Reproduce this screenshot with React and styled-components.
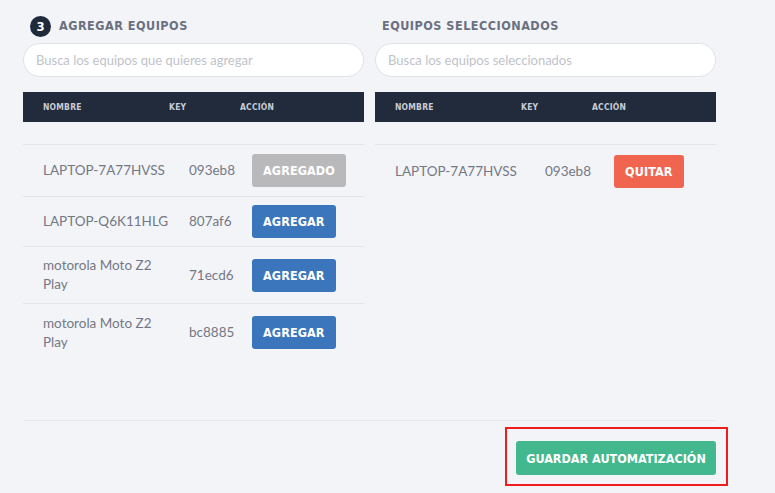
import React from 'react'
import styled, { createGlobalStyle } from 'styled-components'

const GlobalStyle = createGlobalStyle`
  * { box-sizing: border-box; }
  body {
    margin: 0;
    background: #f3f4f8;
    font-family: Lato, "Open Sans", sans-serif;
  }
`

const Page = styled.div`
  min-height: 100vh;
  display: flex;
  flex-direction: column;
  padding: 15px 0 0 23px;
  width: 716px;
`

const Columns = styled.div`
  flex: 1;
  display: grid;
  grid-template-columns: 341px 341px;
  column-gap: 11px;
  align-items: start;
`

const Column = styled.section`
  display: flex;
  flex-direction: column;
`

const Title = styled.h2`
  margin: 0;
  height: 20px;
  display: flex;
  align-items: center;
  gap: 8px;
  padding-left: ${p => p.$indent || 0}px;
  font-family: "DejaVu Sans Condensed", "DejaVu Sans", sans-serif;
  font-weight: 700;
  font-size: 12.5px;
  letter-spacing: 0.5px;
  color: #6a7080;
`

const Step = styled.span`
  width: 21px;
  height: 21px;
  border-radius: 50%;
  background: #1f2a3b;
  color: #fff;
  display: flex;
  align-items: center;
  justify-content: center;
  font-size: 13px;
  font-weight: 700;
  letter-spacing: 0;
  margin-left: 7px;
  margin-top: 3px;
`

const Search = styled.input`
  margin-top: 8px;
  height: 34px;
  width: 341px;
  border: 1px solid #dfe2e8;
  border-radius: 17px;
  background: #fff;
  padding: 0 12px;
  font-family: Lato, "Open Sans", sans-serif;
  font-size: 13px;
  color: #6b7280;
  outline: none;
  &::placeholder { color: #bfc3cb; }
`

const HeadRow = styled.div`
  margin-top: 15px;
  height: 30px;
  background: #212b3b;
  display: grid;
  grid-template-columns: 126px 71px auto;
  align-items: center;
  padding-left: 20px;
  font-family: "DejaVu Sans Condensed", "DejaVu Sans", sans-serif;
  font-weight: 700;
  font-size: 8.5px;
  letter-spacing: 0.2px;
  color: #c9cdd5;
`

const Body = styled.div`
  margin-top: 22px;
  border-top: 1px solid #e3e5ea;
`

const Row = styled.div`
  display: grid;
  grid-template-columns: ${p => p.$cols};
  align-items: center;
  min-height: ${p => p.$h || 50}px;
  padding: 8px 0 8px 20px;
  border-bottom: ${p => (p.$last ? 'none' : '1px solid #e3e5ea')};
  font-size: 13.5px;
  line-height: 19px;
  color: #737885;
`

const Name = styled.span`
  padding-right: 16px;
`

const Action = styled.button`
  justify-self: start;
  height: 33px;
  padding: 0 11px;
  border: none;
  border-radius: 3px;
  background: ${p => p.$bg};
  color: #fff;
  font-family: "DejaVu Sans Condensed", "DejaVu Sans", sans-serif;
  font-weight: 700;
  font-size: 12.5px;
  letter-spacing: 0.1px;
`

const Footer = styled.footer`
  border-top: 1px solid #e6e8ec;
  display: flex;
  justify-content: flex-end;
  padding: 20px 0 18px;
`

const Highlight = styled.div`
  position: relative;
  &::after {
    content: '';
    position: absolute;
    top: -14px;
    bottom: -11px;
    left: -11px;
    right: -12px;
    border: 2px solid #ee1c1c;
    pointer-events: none;
  }
`

const SaveButton = styled.button`
  height: 34px;
  width: 200px;
  border: none;
  border-radius: 3px;
  background: #43b78d;
  color: #fff;
  font-family: "DejaVu Sans Condensed", "DejaVu Sans", sans-serif;
  font-weight: 700;
  font-size: 12.5px;
`

const available = [
  { name: 'LAPTOP-7A77HVSS', key: '093eb8', added: true },
  { name: 'LAPTOP-Q6K11HLG', key: '807af6' },
  { name: 'motorola Moto Z2 Play', key: '71ecd6' },
  { name: 'motorola Moto Z2 Play', key: 'bc8885' },
]

const selected = [{ name: 'LAPTOP-7A77HVSS', key: '093eb8' }]

const Header = () => (
  <HeadRow>
    <span>NOMBRE</span>
    <span>KEY</span>
    <span>ACCIÓN</span>
  </HeadRow>
)

export default function App() {
  return (
    <>
      <GlobalStyle />
      <Page>
        <Columns>
          <Column>
            <Title>
              <Step>3</Step>
              AGREGAR EQUIPOS
            </Title>
            <Search placeholder="Busca los equipos que quieres agregar" />
            <Header />
            <Body>
              {available.map((d, i) => (
                <Row
                  key={d.key}
                  $cols="146px 63px auto"
                  $h={i === 0 ? 52 : i === 1 ? 50 : 57}
                  $last={i === available.length - 1}
                >
                  <Name>{d.name}</Name>
                  <span>{d.key}</span>
                  <Action $bg={d.added ? '#b9b9bb' : '#3b76bc'}>
                    {d.added ? 'AGREGADO' : 'AGREGAR'}
                  </Action>
                </Row>
              ))}
            </Body>
          </Column>
          <Column>
            <Title $indent={7}>EQUIPOS SELECCIONADOS</Title>
            <Search placeholder="Busca los equipos seleccionados" />
            <Header />
            <Body>
              {selected.map(d => (
                <Row key={d.key} $cols="150px 69px auto" $h={52} $last>
                  <Name>{d.name}</Name>
                  <span>{d.key}</span>
                  <Action $bg="#f06550">QUITAR</Action>
                </Row>
              ))}
            </Body>
          </Column>
        </Columns>
        <Footer>
          <Highlight>
            <SaveButton>GUARDAR AUTOMATIZACIÓN</SaveButton>
          </Highlight>
        </Footer>
      </Page>
    </>
  )
}
